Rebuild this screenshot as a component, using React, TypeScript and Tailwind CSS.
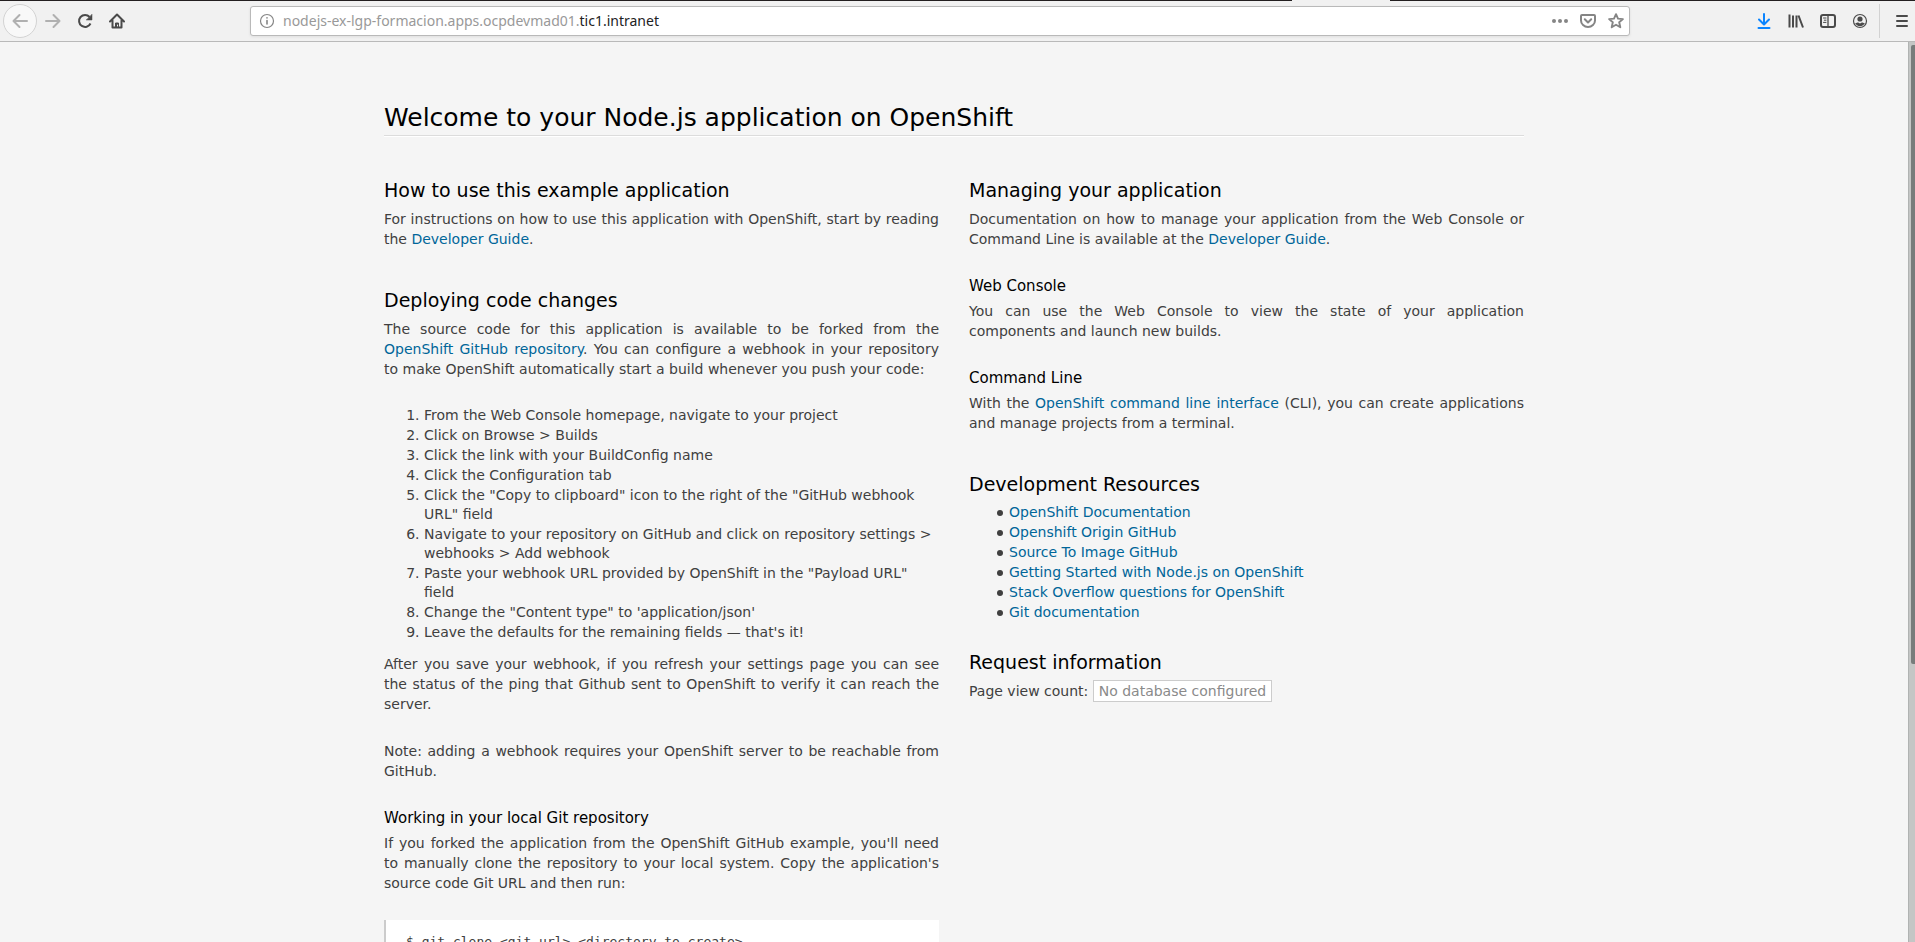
import type { ReactNode } from "react";

const steps = [
  "From the Web Console homepage, navigate to your project",
  "Click on Browse > Builds",
  "Click the link with your BuildConfig name",
  "Click the Configuration tab",
  'Click the "Copy to clipboard" icon to the right of the "GitHub webhook URL" field',
  "Navigate to your repository on GitHub and click on repository settings > webhooks > Add webhook",
  'Paste your webhook URL provided by OpenShift in the "Payload URL" field',
  "Change the \"Content type\" to 'application/json'",
  "Leave the defaults for the remaining fields — that's it!",
];

const resources = [
  "OpenShift Documentation",
  "Openshift Origin GitHub",
  "Source To Image GitHub",
  "Getting Started with Node.js on OpenShift",
  "Stack Overflow questions for OpenShift",
  "Git documentation",
];

function Icon({ children }: { children: ReactNode }) {
  return (
    <svg viewBox="0 0 16 16" className="size-4" fill="none" stroke="currentColor" strokeWidth="2" strokeLinecap="round" strokeLinejoin="round" aria-hidden="true">
      {children}
    </svg>
  );
}

function ToolButton({ label, className, children }: { label: string; className: string; children: ReactNode }) {
  return (
    <button type="button" aria-label={label} className={`flex shrink-0 items-center justify-center ${className}`}>
      <Icon>{children}</Icon>
    </button>
  );
}

function Toolbar() {
  return (
    <header className="shrink-0 border-b border-[#b9b9b9] bg-[#f1f1f1]">
      <div className="flex h-px justify-between">
        <div className="w-[1292px] bg-[#231f20]" />
        <div className="w-[525px] bg-[#231f20]" />
      </div>
      <div className="flex h-10 items-center pr-[3px] pl-[3px] text-[#4a4a4a]">
        <ToolButton label="Back" className="size-[34px] rounded-full border border-[#d3d3d3] bg-[#f8f8f8] text-[#b0b0b0]">
          <path d="M15 8H1.5M7.5 2 1.5 8l6 6" />
        </ToolButton>
        <ToolButton label="Forward" className="h-8 w-8 text-[#b0b0b0]">
          <path d="M1 8h13.5M8.5 2l6 6-6 6" />
        </ToolButton>
        <ToolButton label="Reload" className="h-8 w-8">
          <path d="M13.500 10.500A6 6 0 1 1 12.600 4" strokeLinecap="butt" />
          <path d="M15 1.500v5.500H9.500Z" fill="currentColor" strokeWidth=".5" />
        </ToolButton>
        <ToolButton label="Home" className="h-8 w-8">
          <path d="M1 8.5 8 1.5l7 7M3.5 7.500v7h9v-7" />
          <path d="M6.500 14.500V10h3v4.500" fill="currentColor" strokeWidth="1" />
          <path d="M8.500 12v1" stroke="#f1f1f1" strokeWidth="1" />
        </ToolButton>

        <div className="mr-[118px] ml-[117px] flex h-[30px] flex-1 items-center rounded-[3px] border border-[#b9b9b9] bg-white pr-[5px] pl-2 text-[#858585] shadow-[0_1px_3px_rgba(0,0,0,0.08)]">
          <button type="button" aria-label="Site information" className="flex shrink-0">
            <Icon>
              <circle cx="8" cy="8" r="6.500" strokeWidth="1.200" />
              <path d="M8 7.500v3.500M8 4.800v.2" strokeWidth="1.600" />
            </Icon>
          </button>
          <div className="ml-2 flex-1 font-['Noto_Sans',sans-serif] text-[14px] leading-5 whitespace-nowrap text-[#999]">
            nodejs-ex-lgp-formacion.apps.ocpdevmad01.<span className="text-[#222]">tic1.intranet</span>
          </div>
          <ToolButton label="Page actions" className="w-7">
            <g fill="currentColor" stroke="none">
              <circle cx="2" cy="8" r="2" />
              <circle cx="8" cy="8" r="2" />
              <circle cx="14" cy="8" r="2" />
            </g>
          </ToolButton>
          <ToolButton label="Save to Pocket" className="w-7">
            <path d="M2 2h12a1 1 0 0 1 1 1v4.500a7 6.500 0 0 1-14 0V3a1 1 0 0 1 1-1Z" />
            <path d="m4.800 6.300 3.200 3.200 3.200-3.200" />
          </ToolButton>
          <ToolButton label="Bookmark this page" className="-mr-[6px] w-7">
            <path d="m8 1.200 2 4.400 4.900.5-3.700 3.200 1.100 4.900L8 11.700l-4.300 2.500 1.100-4.900L1.100 6.100 6 5.600Z" strokeWidth="1.900" />
          </ToolButton>
        </div>

        <ToolButton label="Downloads" className="w-8 text-[#0a84ff]">
          <path d="M8 1v10M3 6.500l5 5 5-5" />
          <path d="M2.500 15h11" />
        </ToolButton>
        <ToolButton label="Library" className="w-8">
          <path d="M1.500 1.500v13M5 2.500v12M8.500 2.500v12M10.500 2.500l4.500 12" strokeLinecap="butt" />
        </ToolButton>
        <ToolButton label="Sidebars" className="w-8">
          <rect x="1" y="2" width="14" height="12" rx="2" />
          <path d="M8 2v12" strokeWidth="1.300" />
          <path d="M3.500 5H6M4.300 7.200H6M3.500 9.400H6" strokeWidth="1" />
        </ToolButton>
        <ToolButton label="Account" className="w-8">
          <circle cx="8" cy="8" r="6.500" strokeWidth="1.200" />
          <circle cx="8" cy="6" r="2.600" fill="currentColor" stroke="none" />
          <path d="M3.200 10c1.500 0 2-.6 3-.6L8 10.500l1.800-1.100c1 0 1.500.6 3 .6-.6 2-2.600 3.200-4.800 3.200S3.800 12 3.200 10Z" fill="currentColor" stroke="none" />
        </ToolButton>
        <div className="ml-[3px] h-[34px] w-px bg-[#d2d2d2]" />
        <ToolButton label="Open menu" className="-mr-[6px] ml-[6px] w-8">
          <path d="M3 3h10M3 8h10M3 13h10" />
        </ToolButton>
      </div>
    </header>
  );
}

function H2({ children }: { children: ReactNode }) {
  return <h2 className="mb-[7px] text-[19px] leading-6 text-black">{children}</h2>;
}

function H3({ children }: { children: ReactNode }) {
  return <h3 className="mb-[5px] text-[15px] leading-5 text-black">{children}</h3>;
}

function P({ children }: { children: ReactNode }) {
  return <p className="mb-[27px] text-justify">{children}</p>;
}

function A({ children }: { children: ReactNode }) {
  return (
    <a href="#" className="text-[#069]">
      {children}
    </a>
  );
}

export default function App() {
  return (
    <div className="flex h-screen flex-col overflow-hidden bg-[#f5f5f5]">
      <Toolbar />
      <div className="flex min-h-0 flex-1">
        <main className="min-w-0 flex-1 overflow-hidden font-['DejaVu_Sans',sans-serif] text-[14px] leading-5 text-[#404040]">
          <div className="mx-auto max-w-[1140px] pt-[61px]">
            <h1 className="mb-[42px] border-b border-[#dcdcdc] pb-[2px] text-[25px] leading-[30px] text-black shadow-[0_1px_0_#fff]">
              Welcome to your Node.js application on OpenShift
            </h1>
            <div className="grid grid-cols-2 gap-[30px]">
              <div>
                <section className="mb-[39px]">
                  <H2>How to use this example application</H2>
                  <P>
                    For instructions on how to use this application with OpenShift, start by reading the <A>Developer Guide</A>.
                  </P>
                </section>
                <section>
                  <H2>Deploying code changes</H2>
                  <P>
                    The source code for this application is available to be forked from the <A>OpenShift GitHub repository</A>. You can configure a webhook in your repository to make OpenShift automatically start a build whenever you push your code:
                  </P>
                  <ol className="mb-3 flex list-decimal flex-col gap-px pl-10 leading-[19px]">
                    {steps.map((step) => (
                      <li key={step}>{step}</li>
                    ))}
                  </ol>
                  <P>
                    After you save your webhook, if you refresh your settings page you can see the status of the ping that Github sent to OpenShift to verify it can reach the server.
                  </P>
                  <P>Note: adding a webhook requires your OpenShift server to be reachable from GitHub.</P>
                  <H3>Working in your local Git repository</H3>
                  <P>
                    If you forked the application from the OpenShift GitHub example, you'll need to manually clone the repository to your local system. Copy the application's source code Git URL and then run:
                  </P>
                  <pre className="border-l-2 border-[#ccc] bg-white px-5 py-3 font-['DejaVu_Sans_Mono',monospace] text-[13px] leading-5">
                    {"$ git clone <git_url> <directory_to_create>"}
                  </pre>
                </section>
              </div>
              <div>
                <section className="mb-[39px]">
                  <H2>Managing your application</H2>
                  <P>
                    Documentation on how to manage your application from the Web Console or Command Line is available at the <A>Developer Guide</A>.
                  </P>
                  <H3>Web Console</H3>
                  <P>You can use the Web Console to view the state of your application components{"\u00a0"}and launch new builds.</P>
                  <H3>Command Line</H3>
                  <P>
                    With the <A>OpenShift command line interface</A> (CLI), you can create applications and manage projects from a terminal.
                  </P>
                </section>
                <section className="mb-7">
                  <H2>Development Resources</H2>
                  <ul className="flex flex-col gap-px pl-7 leading-[19px]">
                    {resources.map((item) => (
                      <li key={item} className="flex items-center gap-[6px] before:size-[6px] before:rounded-full before:bg-[#404040]">
                        <A>{item}</A>
                      </li>
                    ))}
                  </ul>
                </section>
                <section>
                  <H2>Request information</H2>
                  <p>
                    Page view count: <span className="border border-[#ccc] bg-white px-[5px] py-[2px] text-[#8a8a8a]">No database configured</span>
                  </p>
                </section>
              </div>
            </div>
          </div>
        </main>
        <div className="w-[7px] shrink-0 border-l border-[#b0b3b2] bg-[#c4c6c5] pt-[3px] pl-[2px]" aria-hidden="true">
          <div className="h-[69%] rounded-l-[2px] bg-[#777c7b]" />
        </div>
      </div>
    </div>
  );
}
